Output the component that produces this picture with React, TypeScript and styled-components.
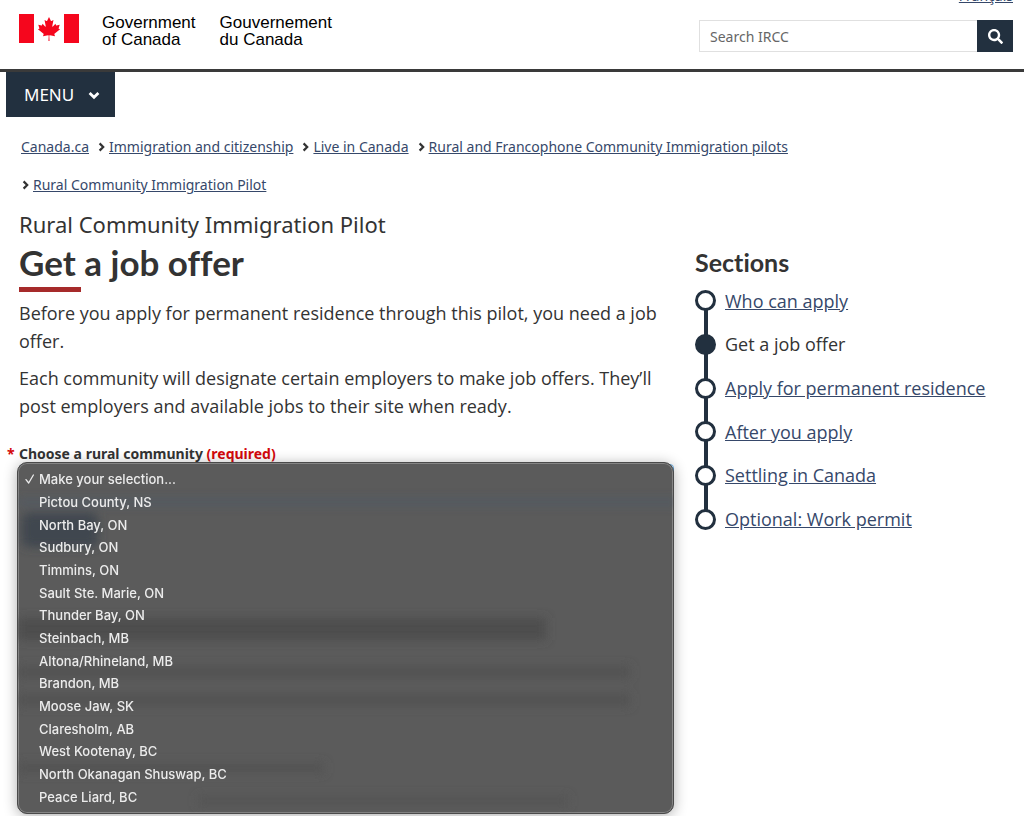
import React, { useState } from "react";
import styled, { createGlobalStyle } from "styled-components";
import { FaSearch } from "react-icons/fa";

const navy = "#22303f";
const linkColor = "#36486a";
const ink = "#333333";
const sans = `"Noto Sans", "Open Sans", sans-serif`;
const copy = `"Open Sans", "Noto Sans", sans-serif`;
const display = `Lato, "Noto Sans", sans-serif`;

const GlobalStyle = createGlobalStyle`
  *, *::before, *::after { box-sizing: border-box; }
  body {
    margin: 0;
    background: #fff;
    color: ${ink};
    font: 18px/28px ${copy};
  }
  a { color: ${linkColor}; }
  h1, h2, p, ul, ol { margin: 0; padding: 0; }
  ul, ol { list-style: none; }
`;

const Page = styled.div`
  min-height: 100vh;
`;

const Header = styled.header`
  display: flex;
  justify-content: space-between;
  align-items: flex-start;
  height: 72px;
  padding: 0 11px 0 19px;
  border-bottom: 3px solid #3a3a3a;
  overflow: hidden;
`;

const Brand = styled.a`
  display: flex;
  align-items: flex-start;
  margin-top: 14px;
  color: #000;
  font: 17px/17px "Liberation Sans", Arial, sans-serif;
  text-decoration: none;
`;

const Flag = styled.span`
  display: flex;
  align-items: center;
  justify-content: center;
  width: 60px;
  height: 29px;
  margin-right: 23px;
  border: solid #f5061d;
  border-width: 0 15px;
`;

const BrandName = styled.span`
  margin-right: 24px;
`;

const HeaderTools = styled.div`
  display: flex;
  flex-direction: column;
  align-items: flex-end;
  margin-top: -14px;
`;

const LanguageLink = styled.a`
  font: 14px/20px ${sans};
`;

const SearchForm = styled.form`
  display: flex;
  height: 32px;
  margin-top: 14px;
`;

const SearchInput = styled.input`
  width: 278px;
  padding: 0 10px;
  border: 1px solid #e0e0e0;
  border-right: 0;
  background: #fff;
  font: 14px ${sans};
  &::placeholder { color: #666; opacity: 1; }
`;

const SearchButton = styled.button`
  display: flex;
  align-items: center;
  justify-content: center;
  width: 36px;
  padding: 0;
  border: 0;
  background: ${navy};
  color: #fff;
`;

const MenuButton = styled.button`
  display: flex;
  align-items: center;
  gap: 14px;
  height: 45px;
  margin-left: 6px;
  padding: 0 15px 0 18px;
  border: 0;
  background: ${navy};
  color: #fff;
  font: 17px ${sans};
`;

const Breadcrumb = styled.ol`
  display: flex;
  flex-wrap: wrap;
  column-gap: 8px;
  padding: 11px 11px 0 21px;
  font: 14px/38px ${sans};
`;

const Crumb = styled.li`
  display: flex;
  align-items: center;
  gap: 4px;
`;

const Content = styled.main`
  padding: 5px 19px 0;
`;

const Kicker = styled.p`
  font: 22px/30px ${sans};
`;

const Columns = styled.div`
  display: grid;
  grid-template-columns: minmax(0, 1fr) 310px;
  column-gap: 21px;
`;

const Title = styled.h1`
  font: 700 35px/46px ${display};
  font-variant-ligatures: none;
  &::after {
    content: "";
    display: block;
    width: 62px;
    height: 5px;
    margin-top: 2px;
    background: #a62a2a;
  }
`;

const Intro = styled.div`
  display: flex;
  flex-direction: column;
  gap: 9px;
  padding-top: 7px;
`;

const Field = styled.div`
  position: relative;
  margin-top: 24px;
`;

const FieldLabel = styled.label`
  display: block;
  font: 700 14px/20px ${sans};
  &::before {
    content: "*";
    position: absolute;
    left: -12px;
    color: #d3080c;
  }
`;

const Required = styled.span`
  color: #d3080c;
`;

const Select = styled.select`
  width: 100%;
  height: 36px;
  border: 1px solid #66afe9;
  border-radius: 4px;
  background: #fff;
  font: 14px ${sans};
`;

const Popup = styled.div`
  position: absolute;
  top: 18px;
  left: -2px;
  right: 0;
  height: 352px;
  padding: 5px 0;
  border: 1px solid #4a4a4a;
  border-radius: 10px;
  background: #5b5b5b;
  box-shadow: inset 0 0 0 1px #858585, 0 2px 14px rgba(0, 0, 0, 0.32);
  overflow: hidden;
`;

const Reflection = styled.svg`
  position: absolute;
  inset: 0;
  width: 100%;
  height: 100%;
`;

const Options = styled.ul`
  position: relative;
  display: grid;
  grid-auto-rows: 1fr;
  height: 100%;
`;

const Option = styled.li`
  display: flex;
  align-items: center;
  padding-left: 7px;
  color: #ececec;
  font: 500 13px/20px Inter, "Liberation Sans", sans-serif;
  cursor: default;
`;

const Tick = styled.span`
  display: flex;
  width: 14px;
`;

const SectionsTitle = styled.h2`
  font: 700 25px/46px ${display};
  font-variant-ligatures: none;
`;

const Steps = styled.ol`
  display: grid;
  grid-auto-rows: 1fr;
  height: 262px;
  margin-top: -6px;
`;

const Step = styled.li<{ $current?: boolean }>`
  position: relative;
  display: flex;
  align-items: center;
  gap: 9px;
  &::before {
    content: "";
    z-index: 1;
    width: 21px;
    height: 21px;
    border: 3px solid ${navy};
    border-radius: 50%;
    background: ${(p) => (p.$current ? navy : "#fff")};
  }
  &:not(:last-child)::after {
    content: "";
    position: absolute;
    top: 50%;
    left: 9px;
    width: 4px;
    height: 100%;
    background: ${navy};
  }
`;

const crumbs = [
  "Canada.ca",
  "Immigration and citizenship",
  "Live in Canada",
  "Rural and Francophone Community Immigration pilots",
  "Rural Community Immigration Pilot",
];

const communities = [
  "Make your selection...",
  "Pictou County, NS",
  "North Bay, ON",
  "Sudbury, ON",
  "Timmins, ON",
  "Sault Ste. Marie, ON",
  "Thunder Bay, ON",
  "Steinbach, MB",
  "Altona/Rhineland, MB",
  "Brandon, MB",
  "Moose Jaw, SK",
  "Claresholm, AB",
  "West Kootenay, BC",
  "North Okanagan Shuswap, BC",
  "Peace Liard, BC",
];

const steps = [
  "Who can apply",
  "Get a job offer",
  "Apply for permanent residence",
  "After you apply",
  "Settling in Canada",
  "Optional: Work permit",
];

function MapleLeaf() {
  return (
    <svg width="24" height="24" viewBox="-2015 -2000 4030 4030" aria-hidden="true">
      <path
        fill="#f5061d"
        d="m-90 2030 45-863a95 95 0 0 0-111-98l-859 151 116-320a65 65 0 0 0-20-73l-941-762 212-99a65 65 0 0 0 34-79l-186-572 542 115a65 65 0 0 0 73-38l105-247 423 454a65 65 0 0 0 111-57l-204-1052 327 189a65 65 0 0 0 91-27l332-652 332 652a65 65 0 0 0 91 27l327-189-204 1052a65 65 0 0 0 111 57l423-454 105 247a65 65 0 0 0 73 38l542-115-186 572a65 65 0 0 0 34 79l212 99-941 762a65 65 0 0 0-20 73l116 320-859-151a95 95 0 0 0-111 98l45 863z"
      />
    </svg>
  );
}

function ChevronDown() {
  return (
    <svg width="12" height="10" viewBox="0 0 12 10" fill="none" aria-hidden="true">
      <path d="M1.6 3 6 7.3 10.4 3" stroke="currentColor" strokeWidth="2.8" />
    </svg>
  );
}

function ChevronRight() {
  return (
    <svg width="8" height="10" viewBox="0 0 8 10" fill="none" aria-hidden="true">
      <path d="M2.6 1.4 6.2 5 2.6 8.6" stroke="currentColor" strokeWidth="2.2" />
    </svg>
  );
}

function PageReflection() {
  return (
    <Reflection aria-hidden="true">
      <defs>
        <filter id="soft" x="-20%" y="-100%" width="140%" height="300%">
          <feGaussianBlur stdDeviation="5" />
        </filter>
      </defs>
      <g filter="url(#soft)">
        <rect x="0" y="36" width="660" height="6" fill="#4d5a68" opacity="0.7" />
        <rect x="4" y="50" width="76" height="34" rx="6" fill="#3f474f" />
        <rect x="0" y="155" width="528" height="22" fill="#4e4e4e" />
        <rect x="0" y="203" width="612" height="12" fill="#535353" />
        <rect x="0" y="231" width="612" height="12" fill="#535353" />
        <rect x="0" y="300" width="306" height="10" fill="#535353" />
        <rect x="180" y="333" width="370" height="10" fill="#555555" />
      </g>
    </Reflection>
  );
}

export default function App() {
  const [choice, setChoice] = useState(communities[0]);

  return (
    <Page>
      <GlobalStyle />
      <Header>
        <Brand href="#">
          <Flag>
            <MapleLeaf />
          </Flag>
          <BrandName>
            Government
            <br />
            of Canada
          </BrandName>
          <BrandName lang="fr">
            Gouvernement
            <br />
            du Canada
          </BrandName>
        </Brand>
        <HeaderTools>
          <LanguageLink href="#" lang="fr">
            Français
          </LanguageLink>
          <SearchForm role="search">
            <SearchInput type="search" placeholder="Search IRCC" aria-label="Search IRCC" />
            <SearchButton type="button" aria-label="Search">
              <FaSearch size={15} />
            </SearchButton>
          </SearchForm>
        </HeaderTools>
      </Header>

      <nav aria-label="Menu">
        <MenuButton type="button">
          MENU <ChevronDown />
        </MenuButton>
      </nav>

      <nav aria-label="Breadcrumb">
        <Breadcrumb>
          {crumbs.map((crumb, i) => (
            <Crumb key={crumb}>
              {i > 0 && <ChevronRight />}
              <a href="#">{crumb}</a>
            </Crumb>
          ))}
        </Breadcrumb>
      </nav>

      <Content>
        <Kicker>Rural Community Immigration Pilot</Kicker>
        <Columns>
          <section>
            <Title>Get a job offer</Title>
            <Intro>
              <p>
                Before you apply for permanent residence through this pilot, you need a job offer.
              </p>
              <p>
                Each community will designate certain employers to make job offers. They’ll post
                employers and available jobs to their site when ready.
              </p>
            </Intro>
            <Field>
              <FieldLabel htmlFor="community">
                Choose a rural community <Required>(required)</Required>
              </FieldLabel>
              <Select id="community" value={choice} onChange={(e) => setChoice(e.target.value)}>
                {communities.map((name) => (
                  <option key={name}>{name}</option>
                ))}
              </Select>
              <Popup>
                <PageReflection />
                <Options role="listbox" aria-label="Rural community">
                  {communities.map((name) => (
                    <Option
                      key={name}
                      role="option"
                      aria-selected={name === choice}
                      onClick={() => setChoice(name)}
                    >
                      <Tick>
                        {name === choice && (
                          <svg width="10" height="10" viewBox="0 0 10 10" fill="none">
                            <path
                              d="M1 5.6 3.7 9 8.4 1"
                              stroke="currentColor"
                              strokeWidth="1.3"
                              strokeLinecap="round"
                              strokeLinejoin="round"
                            />
                          </svg>
                        )}
                      </Tick>
                      {name}
                    </Option>
                  ))}
                </Options>
              </Popup>
            </Field>
          </section>
          <aside>
            <SectionsTitle>Sections</SectionsTitle>
            <Steps>
              {steps.map((step, i) => (
                <Step key={step} $current={i === 1}>
                  {i === 1 ? <span>{step}</span> : <a href="#">{step}</a>}
                </Step>
              ))}
            </Steps>
          </aside>
        </Columns>
      </Content>
    </Page>
  );
}
